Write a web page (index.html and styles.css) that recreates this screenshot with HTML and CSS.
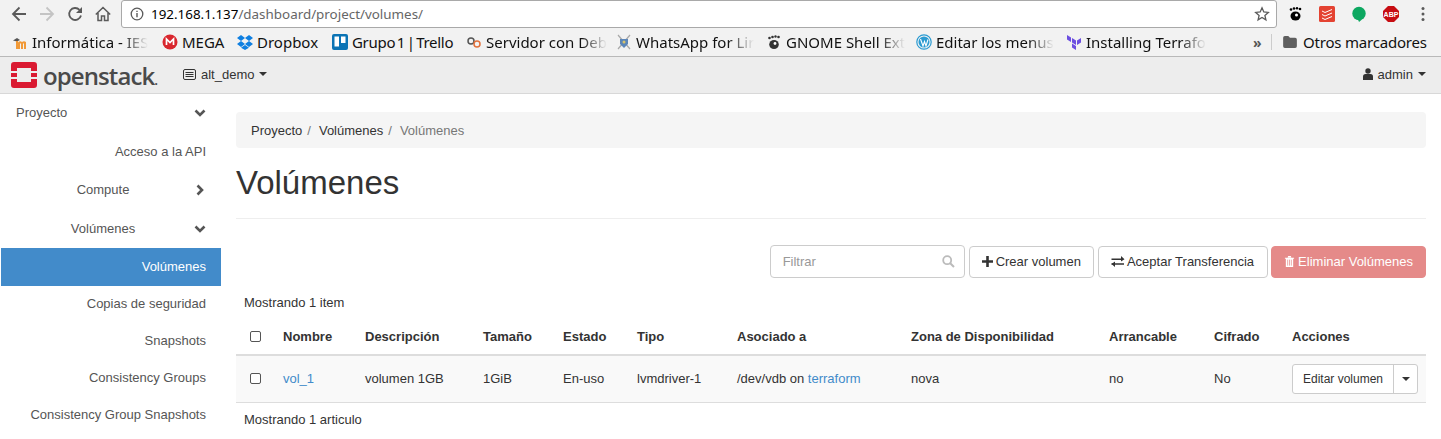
FILE: index.html
```html
<!DOCTYPE html>
<html lang="es">
<head>
  <meta charset="UTF-8">
  <title>Volúmenes - OpenStack Dashboard</title>
  <link rel="stylesheet" href="styles.css">
</head>
<body>

  <div class="browser-bar">
    <svg class="nav-icon" viewBox="0 0 16 16"><path d="M15 8H2.500M8.500 1.500 2 8l6.500 6.500" fill="none" stroke="#5a5a5a" stroke-width="1.800"/></svg>
    <svg class="nav-icon" viewBox="0 0 16 16"><path d="M1 8h12.500M7.500 1.500 14 8l-6.500 6.500" fill="none" stroke="#c4c4c4" stroke-width="1.800"/></svg>
    <svg class="nav-icon" viewBox="0 0 16 16"><path d="M14 9.500A6 6 0 1 1 12.500 3.800" fill="none" stroke="#5a5a5a" stroke-width="1.800"/><path d="M9 7h6V1z" fill="#5a5a5a"/></svg>
    <svg class="nav-icon" viewBox="0 0 16 16"><path d="M.8 8.500 8 1.500l7.200 7M3 7v7.500h3.500v-4.500h3v4.500H13V7" fill="none" stroke="#5a5a5a" stroke-width="1.500"/></svg>
    <div class="omnibox">
      <svg class="info-icon" viewBox="0 0 14 14"><circle cx="7" cy="7" r="5.800" fill="none" stroke="#5a5a5a" stroke-width="1.300"/><path d="M7 6v4.200M7 3.800v1.300" stroke="#5a5a5a" stroke-width="1.400"/></svg>
      <span class="url-host">192.168.1.137</span><span class="url-path">/dashboard/project/volumes/</span>
      <svg class="star-icon" viewBox="0 0 16 16"><path d="M8 1.800 9.800 6l4.500.4-3.400 3 1 4.400L8 11.500l-3.900 2.300 1-4.400-3.400-3L6.200 6z" fill="none" stroke="#5a5a5a" stroke-width="1.300"/></svg>
    </div>
    <div class="extensions">
      <svg class="ext-icon" viewBox="0 0 16 16"><ellipse cx="8.500" cy="10" rx="5" ry="4.500" fill="#000"/><circle cx="4" cy="3.500" r="1.300"/><circle cx="7" cy="2.500" r="1.300"/><circle cx="10" cy="2.200" r="1.200"/><circle cx="13" cy="3" r="1.300"/><circle cx="9.500" cy="9" r="1.500" fill="#fff"/></svg>
      <svg class="ext-icon" viewBox="0 0 16 16"><rect width="16" height="16" rx="1.500" fill="#e44332"/><path d="M3 5l3 1.500L13 3.500M3 8.500l3 1.500 7-3M3 12l3 1.500 7-3" fill="none" stroke="#fff" stroke-width="1"/></svg>
      <svg class="ext-icon" viewBox="0 0 16 16"><circle cx="8" cy="7.500" r="6.700" fill="#0da861"/><path d="M7 13.500h4L8 16z" fill="#0da861"/></svg>
      <svg class="ext-icon" viewBox="0 0 16 16"><path d="M5 0h6l5 5v6l-5 5H5l-5-5V5z" fill="#c70d12"/><text x="8" y="10.500" class="abp-label">ABP</text></svg>
      <svg class="menu-icon" viewBox="0 0 4 16"><circle cx="2" cy="2.500" r="1.500" fill="#5a5a5a"/><circle cx="2" cy="8" r="1.500" fill="#5a5a5a"/><circle cx="2" cy="13.500" r="1.500" fill="#5a5a5a"/></svg>
    </div>
  </div>

  <div class="bookmarks">
    <div class="bookmark mark-ies">
      <svg class="fav" viewBox="0 0 16 16"><path d="M1 6.500 5 4l3 2-3 1.500z" fill="#555"/><path d="M4 15V7h2v1.500Q8 6.500 10 8q2-1.500 4 0v7h-2V9.500h-1V15H9V9.500H8V15H6z" fill="#f19a38"/></svg>
      <span class="mark-text mark-fade">Informática - IES</span>
    </div>
    <div class="bookmark mark-mega">
      <svg class="fav" viewBox="0 0 16 16"><circle cx="8" cy="8" r="7.500" fill="#d9272e"/><path d="M4.500 11V5L8 8.500 11.500 5v6" fill="none" stroke="#fff" stroke-width="1.700"/></svg>
      <span class="mark-text">MEGA</span>
    </div>
    <div class="bookmark mark-dropbox">
      <svg class="fav" viewBox="0 0 16 16"><path d="M4 1 0 4l4 3 4-3zM12 1 8 4l4 3 4-3zM4 7 0 10l4 3 4-3zM12 7l-4 3 4 3 4-3zM4 13.800 8 16l4-2.200L8 11z" fill="#0e7fe1"/></svg>
      <span class="mark-text">Dropbox</span>
    </div>
    <div class="bookmark mark-trello">
      <svg class="fav" viewBox="0 0 16 16"><rect width="16" height="16" rx="2" fill="#0c74b5"/><rect x="2.500" y="2.500" width="4.500" height="10" fill="#fff"/><rect x="9" y="2.500" width="4.500" height="6.500" fill="#fff"/></svg>
      <span class="mark-text mark-tight">Grupo 1 | Trello</span>
    </div>
    <div class="bookmark mark-debian">
      <svg class="fav" viewBox="0 0 16 16"><circle cx="5" cy="7" r="3" fill="none" stroke="#555" stroke-width="1.500"/><circle cx="11" cy="10" r="3" fill="none" stroke="#e2703a" stroke-width="1.500"/></svg>
      <span class="mark-text mark-fade">Servidor con Deb</span>
    </div>
    <div class="bookmark mark-whatsapp">
      <svg class="fav" viewBox="0 0 16 16"><path d="M2 1l12 14M14 1 2 15" stroke="#a9a9a9" stroke-width="1.200"/><path d="M4 5h8v5l-4 4-4-4z" fill="#5c86b8"/><circle cx="8" cy="8" r="1.500" fill="#d9c36a"/></svg>
      <span class="mark-text mark-fade">WhatsApp for Lir</span>
    </div>
    <div class="bookmark mark-gnome">
      <svg class="fav" viewBox="0 0 16 16"><ellipse cx="8" cy="10.500" rx="4.800" ry="4.500" fill="#333"/><circle cx="3.500" cy="4" r="1.300" fill="#333"/><circle cx="6.500" cy="3" r="1.300" fill="#333"/><circle cx="9.500" cy="2.500" r="1.200" fill="#333"/><circle cx="12.500" cy="3" r="1.300" fill="#333"/><circle cx="9" cy="9.500" r="1.400" fill="#fff"/></svg>
      <span class="mark-text mark-fade">GNOME Shell Ext</span>
    </div>
    <div class="bookmark mark-wp">
      <svg class="fav" viewBox="0 0 16 16"><circle cx="8" cy="8" r="7.200" fill="none" stroke="#2b9bd2" stroke-width="1.200"/><circle cx="8" cy="8" r="5.500" fill="#2b9bd2"/><path d="M4.500 5l2.500 7 1.500-4.500L10 12l2-6.500" fill="none" stroke="#fff" stroke-width="1.100"/></svg>
      <span class="mark-text mark-fade">Editar los menus</span>
    </div>
    <div class="bookmark mark-tf">
      <svg class="fav" viewBox="0 0 16 16"><path d="M1 1l4 2.500v4.500L1 5.500zM6 4l4 2.500V11L6 8.500zM11 6.500 15 4v4.500L11 11zM6 9.500l4 2.500v4l-4-2.500z" fill="#6b4ee0"/></svg>
      <span class="mark-text mark-fade">Installing Terrafo</span>
    </div>
    <div class="marks-end">
      <span class="chevrons">»</span>
      <span class="marks-divider"></span>
      <svg class="folder-icon" viewBox="0 0 16 14"><path d="M0 2q0-2 2-2h4l2 2h6q2 0 2 2v8q0 2-2 2H2q-2 0-2-2z" fill="#5f5f5f"/></svg>
      <span class="others">Otros marcadores</span>
    </div>
  </div>

  <nav class="navbar">
    <svg class="logo-mark" viewBox="0 0 26 26"><path d="M3 0h20q3 0 3 3v6h-6V6H6v3H0V3q0-3 3-3zM0 11h6v4H0zM20 11h6v4h-6zM0 17h6v3h14v-3h6v6q0 3-3 3H3q-3 0-3-3z" fill="#da1a32"/></svg>
    <span class="logo-text">openstack<span class="logo-dot">.</span></span>
    <div class="project-picker">
      <svg class="server-icon" viewBox="0 0 13 11"><rect x=".5" y=".5" width="12" height="10" rx="1.500" fill="none" stroke="#333"/><path d="M2.500 3.500h8M2.500 5.500h8M2.500 7.500h8" stroke="#333"/></svg>
      <span>alt_demo</span>
      <span class="caret"></span>
    </div>
    <div class="user-menu">
      <svg class="user-icon" viewBox="0 0 10 12"><circle cx="5" cy="3" r="2.700" fill="#333"/><path d="M0 12V8.500Q0 6 2.500 6h5Q10 6 10 8.500V12z" fill="#333"/></svg>
      <span>admin</span>
      <span class="caret"></span>
    </div>
  </nav>

  <div class="page">
    <aside class="sidebar">
      <div class="side-row side-top">
        <span>Proyecto</span>
        <svg class="chev" viewBox="0 0 12 8"><path d="M1.500 1.500 6 6l4.500-4.500" fill="none" stroke="#555" stroke-width="2.600"/></svg>
      </div>
      <div class="side-row side-link side-first">Acceso a la API</div>
      <div class="side-row side-group">
        <span>Compute</span>
        <svg class="chev chev-right" viewBox="0 0 8 12"><path d="M1.500 1.500 6 6l-4.500 4.500" fill="none" stroke="#555" stroke-width="2.600"/></svg>
      </div>
      <div class="side-row side-group">
        <span>Volúmenes</span>
        <svg class="chev" viewBox="0 0 12 8"><path d="M1.500 1.500 6 6l4.500-4.500" fill="none" stroke="#555" stroke-width="2.600"/></svg>
      </div>
      <div class="side-row side-link side-active">Volúmenes</div>
      <div class="side-row side-link">Copias de seguridad</div>
      <div class="side-row side-link">Snapshots</div>
      <div class="side-row side-link">Consistency Groups</div>
      <div class="side-row side-link">Consistency Group Snapshots</div>
    </aside>

    <main class="content">
      <div class="breadcrumb">
        <span>Proyecto</span><span class="crumb-sep">/</span>
        <span>Volúmenes</span><span class="crumb-sep">/</span>
        <span class="crumb-current">Volúmenes</span>
      </div>

      <h1 class="page-title">Volúmenes</h1>

      <div class="actions">
        <div class="filter">
          <span class="filter-text">Filtrar</span>
          <svg class="search-icon" viewBox="0 0 13 13"><circle cx="5.200" cy="5.200" r="4" fill="none" stroke="#bbb" stroke-width="1.800"/><path d="M8.200 8.200 12 12" stroke="#bbb" stroke-width="2"/></svg>
        </div>
        <button class="btn">
          <svg class="btn-icon" viewBox="0 0 11 11"><path d="M5.500 0v11M0 5.500h11" stroke="#333" stroke-width="2.600"/></svg>
          Crear volumen
        </button>
        <button class="btn btn-wide">
          <svg class="btn-icon btn-icon-wide" viewBox="0 0 13 11"><path d="M0 3.200h10.500M0 8h12.500" stroke="#333" stroke-width="1.500"/><path d="M9.500 0 13 3.200 9.500 5.500zM3.500 5.500 0 8l3.500 3z" fill="#333"/></svg>
          Aceptar Transferencia
        </button>
        <button class="btn btn-danger">
          <svg class="btn-icon" viewBox="0 0 10 12"><path d="M0 2h10v1H9v9H1V3H0zM3.500 0h3l.5 1.500H3z" fill="#fff"/><path d="M3 4v6.500M5 4v6.500M7 4v6.500" stroke="#e58a89" stroke-width=".8"/></svg>
          Eliminar Volúmenes
        </button>
      </div>

      <div class="count">Mostrando 1 item</div>

      <table class="vol-table">
        <colgroup>
          <col class="c-check"><col class="c-name"><col class="c-desc"><col class="c-size"><col class="c-state"><col class="c-type"><col class="c-attach"><col class="c-zone"><col class="c-boot"><col class="c-enc"><col class="c-act">
        </colgroup>
        <thead>
          <tr>
            <th class="check-cell"><span class="check"></span></th>
            <th>Nombre</th>
            <th>Descripción</th>
            <th>Tamaño</th>
            <th>Estado</th>
            <th>Tipo</th>
            <th>Asociado a</th>
            <th>Zona de Disponibilidad</th>
            <th>Arrancable</th>
            <th>Cifrado</th>
            <th>Acciones</th>
          </tr>
        </thead>
        <tbody>
          <tr>
            <td class="check-cell"><span class="check"></span></td>
            <td><a class="link">vol_1</a></td>
            <td>volumen 1GB</td>
            <td>1GiB</td>
            <td>En-uso</td>
            <td>lvmdriver-1</td>
            <td>/dev/vdb on <a class="link">terraform</a></td>
            <td>nova</td>
            <td>no</td>
            <td>No</td>
            <td>
              <div class="split">
                <span class="split-main">Editar volumen</span>
                <span class="split-drop"><span class="caret"></span></span>
              </div>
            </td>
          </tr>
        </tbody>
      </table>

      <div class="count count-bottom">Mostrando 1 articulo</div>
    </main>
  </div>

</body>
</html>
```

FILE: styles.css
```css
* {
  box-sizing: border-box;
}

html, body {
  margin: 0;
  height: 439px;
  overflow: hidden;
}

body {
  font-family: "Liberation Sans", Arial, sans-serif;
  font-size: 13px;
  color: #333;
  background-color: #fff;
}

/* browser chrome */
.browser-bar {
  display: flex;
  align-items: center;
  height: 28px;
  background-color: #f2f2f2;
  padding-left: 11px;
}

.nav-icon {
  width: 16px;
  height: 16px;
  margin-right: 12px;
  flex: none;
}

.omnibox {
  display: flex;
  align-items: center;
  width: 1156px;
  height: 28px;
  margin-left: -2px;
  background-color: #fff;
  border: 1px solid #a9a9a9;
  border-radius: 3px;
  padding-left: 8px;
  font-family: "Noto Sans", sans-serif;
  font-size: 13.400px;
}

.info-icon {
  width: 14px;
  height: 14px;
  margin-right: 7px;
}

.url-host {
  color: #000;
}

.url-path {
  color: #666;
}

.star-icon {
  width: 16px;
  height: 16px;
  margin-left: auto;
  margin-right: 6px;
}

.extensions {
  display: flex;
  align-items: center;
  gap: 16px;
  margin-left: 10px;
}

.ext-icon {
  width: 16px;
  height: 16px;
}

.abp-label {
  font-family: "Liberation Sans", sans-serif;
  font-size: 7px;
  font-weight: bold;
  fill: #fff;
  text-anchor: middle;
}

.menu-icon {
  width: 4px;
  height: 16px;
  margin-left: 6px;
}

.bookmarks {
  display: flex;
  align-items: center;
  height: 29px;
  background-color: #f2f2f2;
  border-bottom: 1px solid #b9b9b9;
  font-family: "Noto Sans", sans-serif;
  font-size: 15px;
  color: #111;
}

.bookmark {
  display: flex;
  align-items: center;
  flex: none;
  overflow: hidden;
  white-space: nowrap;
}

.fav {
  width: 16px;
  height: 16px;
  flex: none;
  margin-right: 4px;
}

/* long bookmark names fade out at the end */
.mark-fade {
  -webkit-mask-image: linear-gradient(to right, #000 calc(100% - 26px), transparent);
  mask-image: linear-gradient(to right, #000 calc(100% - 26px), transparent);
}

.mark-tight {
  word-spacing: -2px;
  letter-spacing: -.3px;
}

.mark-ies { width: 162px; padding-left: 12px; }
.mark-mega { width: 75px; }
.mark-dropbox { width: 95px; }
.mark-trello { width: 134px; }
.mark-debian { width: 150px; }
.mark-whatsapp { width: 150px; }
.mark-gnome { width: 150px; }
.mark-wp { width: 150px; }
.mark-tf { width: 140px; }

.marks-end {
  display: flex;
  align-items: center;
  margin-left: 47px;
}

.chevrons {
  width: 8px;
  color: #555;
  font-weight: bold;
  font-size: 14px;
}

.marks-divider {
  width: 1px;
  height: 16px;
  background-color: #ccc;
  margin: 0 11px 0 10px;
}

.folder-icon {
  width: 14px;
  height: 12px;
  margin-right: 6px;
}

.others {
  letter-spacing: -.2px;
}

/* openstack navbar */
.navbar {
  display: flex;
  align-items: center;
  height: 37px;
  background-color: #ededed;
  border-bottom: 1px solid #d8d8d8;
  padding-left: 11px;
  padding-right: 15px;
}

.logo-mark {
  width: 26px;
  height: 26px;
  flex: none;
}

.logo-text {
  font-family: "Open Sans", sans-serif;
  font-size: 24px;
  font-weight: 600;
  letter-spacing: -.9px;
  color: #4a4a4a;
  margin-left: 6px;
  width: 140px;
}

.logo-dot {
  font-size: 14px;
}

.project-picker {
  display: flex;
  align-items: center;
  color: #333;
  margin-bottom: 2px;
}

.server-icon {
  width: 13px;
  height: 11px;
  margin-right: 5px;
}

.caret {
  display: inline-block;
  width: 0;
  height: 0;
  margin-left: 5px;
  border-top: 4px solid #333;
  border-left: 4px solid transparent;
  border-right: 4px solid transparent;
}

.user-menu {
  display: flex;
  align-items: center;
  margin-left: auto;
  margin-bottom: 2px;
}

.user-icon {
  width: 10px;
  height: 12px;
  margin-right: 5px;
}

/* page */
.page {
  display: flex;
  padding-left: 1px;
}

.sidebar {
  width: 220px;
  flex: none;
  color: #555;
}

.side-row {
  height: 38px;
  line-height: 38px;
}

.side-top {
  display: flex;
  align-items: center;
  justify-content: space-between;
  padding: 0 15px;
  height: 37px;
}

.side-link {
  text-align: right;
  padding-right: 15px;
  height: 37px;
  line-height: 37px;
}

.side-first {
  margin-top: 2px;
}

.side-group {
  display: flex;
  align-items: center;
  margin-top: 1px;
  padding-left: 11px;
  padding-right: 15px;
}

.side-group span {
  flex: 1;
  text-align: center;
}

.chev {
  width: 12px;
  height: 8px;
}

.chev-right {
  width: 8px;
  height: 12px;
  margin: 0 2px;
}

.side-active {
  height: 38px;
  line-height: 38px;
  background-color: #428bca;
  color: #fff;
}

.side-active + .side-link {
  height: 36px;
  line-height: 36px;
}

.content {
  width: 1190px;
  margin-left: 15px;
  padding-top: 18px;
}

.breadcrumb {
  display: flex;
  align-items: center;
  height: 36px;
  padding: 0 15px;
  background-color: #f5f5f5;
  border-radius: 4px;
  color: #333;
}

.crumb-sep {
  color: #777;
  margin: 0 8px 0 5px;
}

.crumb-current {
  color: #777;
}

.page-title {
  margin: 0;
  height: 71px;
  padding-top: 15px;
  font-size: 33px;
  font-weight: 400;
  line-height: 40px;
  color: #333;
  border-bottom: 1px solid #eee;
}

.actions {
  display: flex;
  justify-content: flex-end;
  align-items: center;
  gap: 4px;
  margin-top: 26px;
}

.filter {
  display: flex;
  align-items: center;
  justify-content: space-between;
  width: 195px;
  height: 33px;
  padding: 0 9px 0 12px;
  border: 1px solid #ccc;
  border-radius: 4px;
  color: #999;
}

.search-icon {
  width: 13px;
  height: 13px;
}

.btn {
  display: flex;
  align-items: center;
  height: 32px;
  padding: 0 12px;
  font-family: inherit;
  font-size: 13px;
  color: #333;
  background-color: #fff;
  border: 1px solid #ccc;
  border-radius: 4px;
}

.btn-wide {
  padding-right: 13px;
}

.btn-icon {
  width: 11px;
  height: 11px;
  margin-right: 3px;
}

.btn-icon-wide {
  width: 14px;
  margin-right: 2px;
}

.btn-danger {
  margin-left: -1px;
  color: #fff;
  background-color: #e58a89;
  border-color: #e58a89;
}

.count {
  margin-top: 16px;
  padding-left: 8px;
  line-height: 18px;
}

.count-bottom {
  margin-top: 8px;
}

.vol-table {
  width: 1190px;
  margin-top: 7px;
  table-layout: fixed;
  border-collapse: collapse;
}

.c-check { width: 39px; }
.c-name { width: 82px; }
.c-desc { width: 118px; }
.c-size { width: 80px; }
.c-state { width: 74px; }
.c-type { width: 100px; }
.c-attach { width: 174px; }
.c-zone { width: 198px; }
.c-boot { width: 105px; }
.c-enc { width: 78px; }
.c-act { width: 142px; }

.vol-table th {
  height: 36px;
  padding: 0 8px;
  text-align: left;
  font-weight: bold;
  border-bottom: 2px solid #ddd;
}

.vol-table td {
  height: 47px;
  padding: 0 8px;
  background-color: #f9f9f9;
  border-bottom: 1px solid #ddd;
}

.vol-table .check-cell {
  padding: 0 0 0 14px;
}

.check {
  display: block;
  width: 11px;
  height: 11px;
  background-color: #fff;
  border: 1px solid #555;
  border-radius: 2px;
}

.link {
  color: #428bca;
}

.split {
  display: flex;
  height: 30px;
  width: 126px;
  font-size: 12px;
  background-color: #fff;
  border: 1px solid #ccc;
  border-radius: 3px;
}

.split-main {
  flex: 1;
  text-align: center;
  line-height: 28px;
  border-right: 1px solid #ccc;
}

.split-drop {
  width: 23px;
  display: flex;
  align-items: center;
  justify-content: center;
}

.split-drop .caret {
  margin-left: 0;
}
```
